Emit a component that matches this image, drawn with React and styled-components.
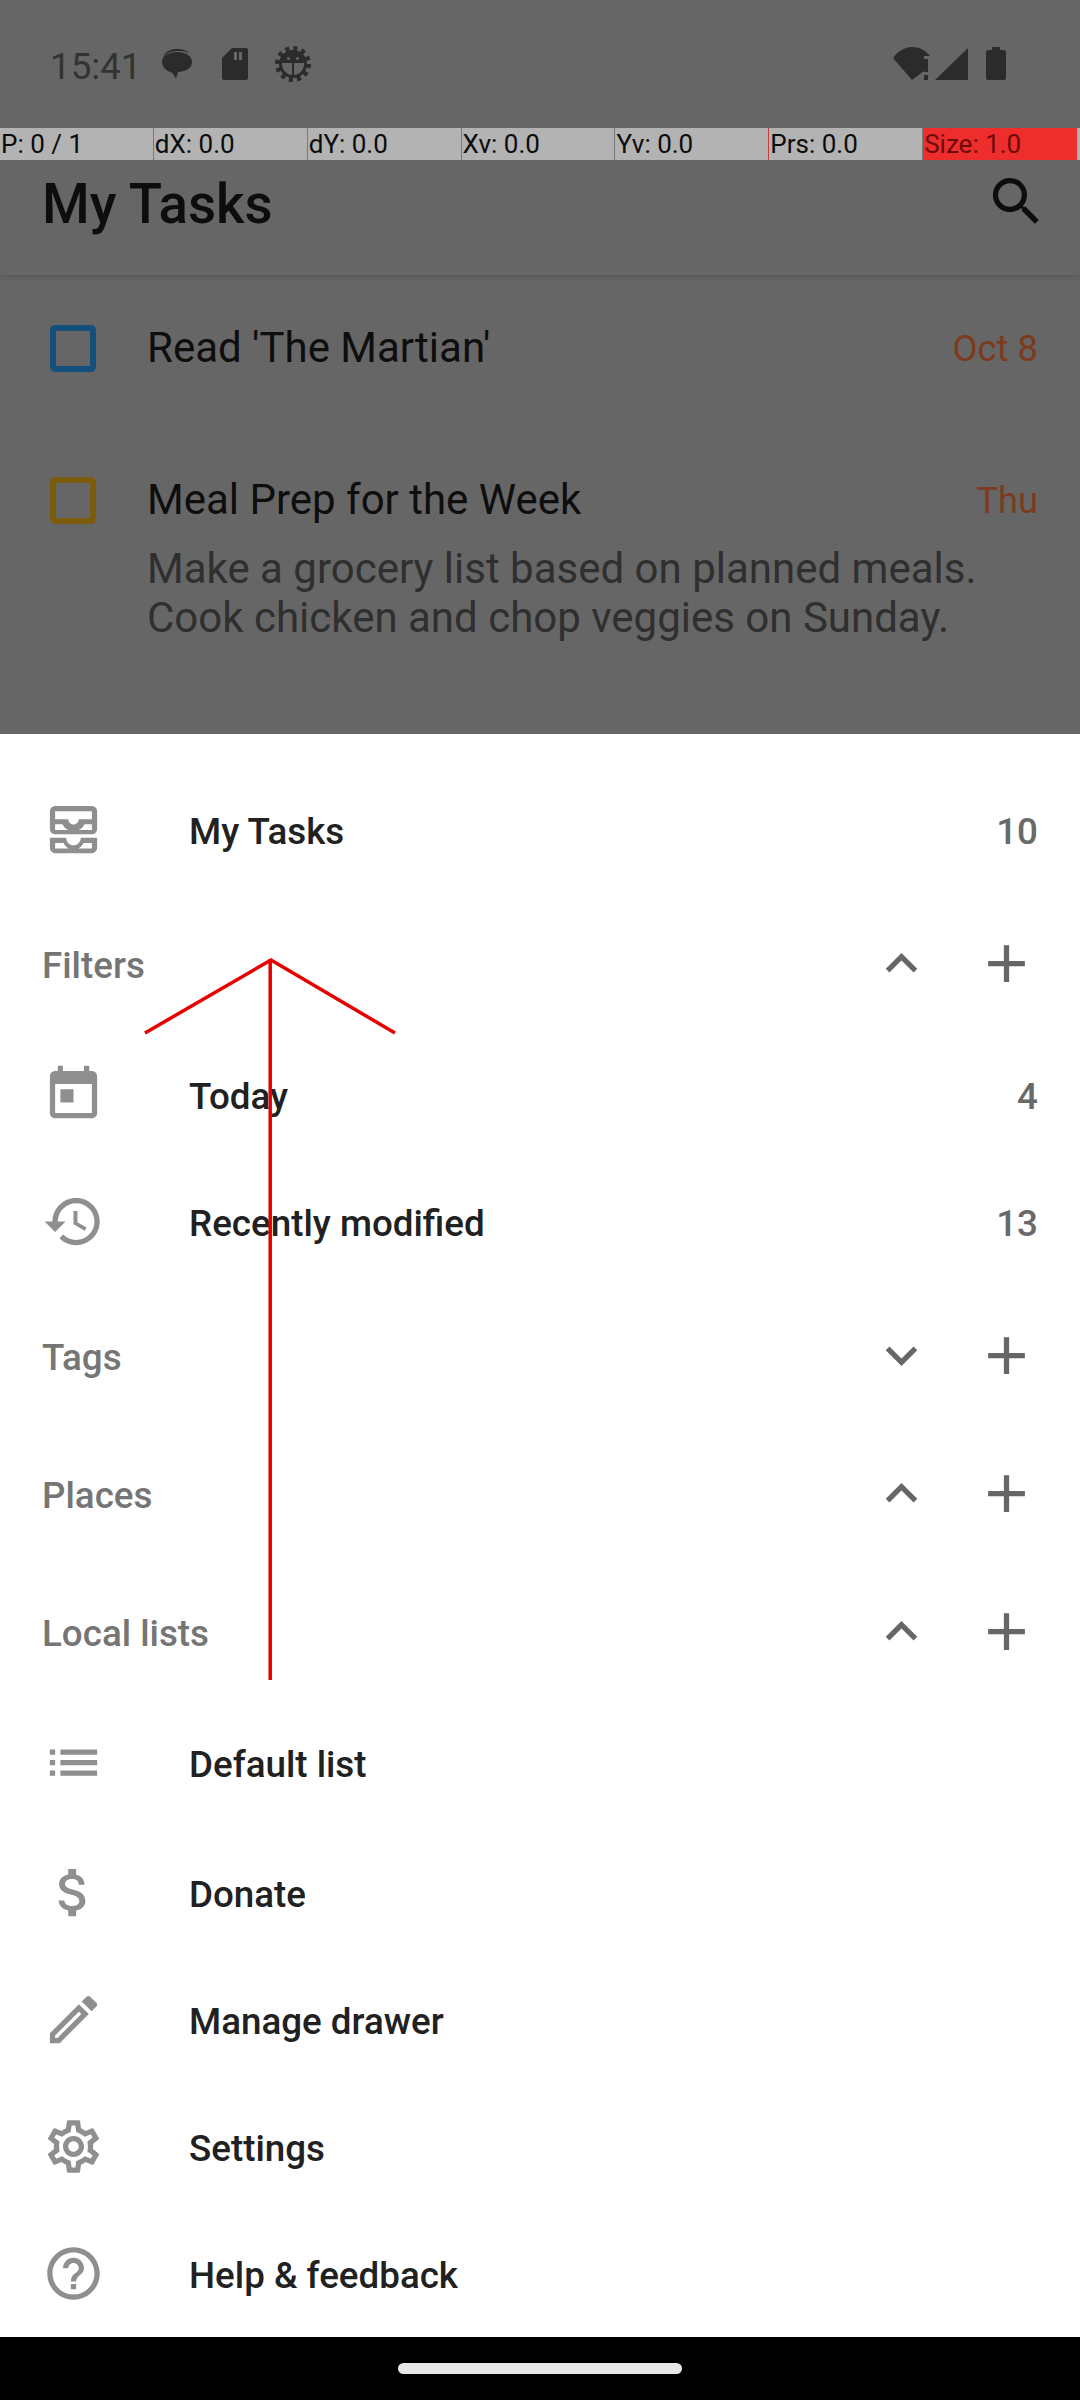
import React from 'react';
import styled, { createGlobalStyle } from 'styled-components';

const GlobalStyle = createGlobalStyle`
  html, body { margin: 0; padding: 0; background: #000; }
  body { font-family: Roboto, "Noto Sans", sans-serif; }
`;

const Page = styled.div`
  position: relative;
  width: 1080px;
  height: 2400px;
  overflow: hidden;
  display: flex;
  flex-direction: column;
`;

const Backdrop = styled.div`
  height: 734px;
  flex: none;
  background: #666;
  overflow: hidden;
`;

const StatusBar = styled.div`
  height: 127px;
  box-sizing: border-box;
  padding: 0 74px 0 50px;
  display: flex;
  align-items: center;
  color: #2b2b2b;
`;

const Clock = styled.span`
  font-size: 36.75px;
  color: #333;
  width: 112px;
  padding-top: 5px;
`;

const StatusGlyph = styled.svg`
  display: block;
  flex: none;
  fill: #2b2b2b;
  margin-left: ${p => p.$gap || 0}px;
`;

const Spacer = styled.div`
  flex: 1;
`;

const PointerBar = styled.div`
  position: absolute;
  top: 128px;
  left: 0;
  width: 1080px;
  height: 32px;
  display: grid;
  grid-template-columns: repeat(7, 153.86px);
  background: #b3b3b3;
`;

const PointerCell = styled.div`
  box-sizing: border-box;
  height: 32px;
  line-height: 32px;
  font-size: 26px;
  padding-left: 1px;
  white-space: nowrap;
  overflow: hidden;
  color: ${p => (p.$alert ? '#6e0a0a' : '#0c0c0c')};
  background: ${p => (p.$alert ? '#ee2d2d' : 'transparent')};
  border-right: ${p => (p.$alert ? 'none' : `1px solid ${p.$edge ? '#c04040' : '#7a7a7a'}`)};
`;

const Toolbar = styled.div`
  height: 148px;
  box-sizing: border-box;
  padding: 0 32px 0 42px;
  display: flex;
  align-items: center;
  justify-content: space-between;
  box-shadow: 0 3px 5px rgba(0, 0, 0, 0.12);
`;

const ToolbarTitle = styled.div`
  font-size: 54.6px;
  font-weight: 500;
  color: #0d0d0d;
  padding-top: 5px;
`;

const Icon = styled.svg`
  display: block;
  flex: none;
  width: 63px;
  height: 63px;
  fill: ${p => p.$color || '#8f8f8f'};
`;

const TaskList = styled.div`
  display: flex;
  flex-direction: column;
  padding-top: 50px;
`;

const Task = styled.div`
  display: grid;
  grid-template-columns: 46px 1fr auto;
  column-gap: 51px;
  padding: 0 42px 0 50px;
  margin-bottom: ${p => p.$after || 0}px;
`;

const Check = styled.div`
  box-sizing: border-box;
  width: 46px;
  height: 47px;
  border: 6px solid ${p => p.$color};
  border-radius: 5px;
`;

const TaskTitle = styled.div`
  font-size: 42px;
  line-height: 44px;
  padding-top: 1px;
  color: #0e0e0e;
`;

const TaskDate = styled.div`
  font-size: 36.4px;
  line-height: 47px;
  color: #7c3a1e;
`;

const TaskNote = styled.div`
  grid-column: 2 / 4;
  margin-top: 20px;
  font-size: 42px;
  line-height: 49px;
  color: #2f2f2f;
`;

const Sheet = styled.div`
  flex: none;
  height: 1603px;
  box-sizing: border-box;
  padding-top: 32px;
  background: #fff;
  overflow: hidden;
`;

const NavRow = styled.div`
  height: 127px;
  box-sizing: border-box;
  padding: 0 42px;
  margin-top: ${p => p.$top || 0}px;
  display: flex;
  align-items: center;
`;

const NavLabel = styled.div`
  flex: 1;
  margin-left: 84px;
  padding-top: 4px;
  font-size: 36.75px;
  font-weight: 500;
  color: #212121;
`;

const NavCount = styled.div`
  padding-top: 4px;
  font-size: 36.75px;
  font-weight: 500;
  color: #696969;
`;

const Header = styled.div`
  height: 138px;
  box-sizing: border-box;
  padding: 3px 42px 0;
  display: flex;
  align-items: center;
`;

const HeaderLabel = styled.div`
  flex: 1;
  padding-top: 4px;
  font-size: 36.75px;
  font-weight: 500;
  color: #757575;
`;

const HeaderActions = styled.div`
  display: flex;
  gap: 42px;
`;

const NavBar = styled.div`
  flex: 1;
  background: #000;
  display: flex;
  justify-content: center;
  padding-top: 26px;
`;

const Pill = styled.div`
  width: 284px;
  height: 11px;
  border-radius: 6px;
  background: #e8e8e8;
`;

const Trace = styled.svg`
  position: absolute;
  top: 0;
  left: 0;
  width: 1080px;
  height: 2400px;
  pointer-events: none;
`;

const paths = {
  search: 'M15.5 14h-.79l-.28-.27C15.41 12.59 16 11.11 16 9.5 16 5.91 13.09 3 9.5 3S3 5.91 3 9.5 5.91 16 9.5 16c1.61 0 3.09-.59 4.23-1.57l.27.28v.79l5 4.99L20.49 19l-4.99-5zm-6 0C7.01 14 5 11.99 5 9.5S7.01 5 9.5 5 14 7.01 14 9.5 11.99 14 9.5 14z',
  add: 'M19 13h-6v6h-2v-6H5v-2h6V5h2v6h6v2z',
  less: 'M12 8l-6 6 1.41 1.41L12 10.83l4.59 4.58L18 14z',
  more: 'M16.59 8.59L12 13.17 7.41 8.59 6 10l6 6 6-6z',
  inbox: 'M19 3H5a2 2 0 0 0-2 2v6.800a2 2 0 0 0 2 2h14a2 2 0 0 0 2-2V5a2 2 0 0 0-2-2zM5 5h14v3.100h-5c0 1.100-.9 2-2 2s-2-.9-2-2H5V5zm0 7.200V10h2.800c.45.95 1.200 1.750 2.200 2.200H5zm14 0h-5c1-.45 1.750-1.250 2.200-2.200H19v2.200zM3 15.100h6.200c.1 1.600 1.300 2.900 2.800 2.900s2.700-1.300 2.800-2.900H21V19a2 2 0 0 1-2 2H5a2 2 0 0 1-2-2v-3.900zm2 2v2.100h5.200c-.9-.4-1.600-1.200-2-2.100H5zm14 0h-3.200c-.4.9-1.100 1.700-2 2.100H19v-2.100z',
  today: 'M19 3h-1V1h-2v2H8V1H6v2H5c-1.11 0-1.99.9-1.99 2L3 19c0 1.1.89 2 2 2h14c1.1 0 2-.9 2-2V5c0-1.1-.9-2-2-2zm0 16H5V8h14v11zM7 10h5v5H7z',
  history: 'M13 3c-4.97 0-9 4.03-9 9H1l3.89 3.89.07.14L9 12H6c0-3.87 3.13-7 7-7s7 3.13 7 7-3.13 7-7 7c-1.93 0-3.68-.79-4.94-2.06l-1.42 1.42C8.27 19.99 10.51 21 13 21c4.97 0 9-4.03 9-9s-4.03-9-9-9zm-1 5v5l4.28 2.54.72-1.21-3.5-2.08V8H12z',
  list: 'M3 13h2v-2H3v2zm0 4h2v-2H3v2zm0-8h2V7H3v2zm4 4h14v-2H7v2zm0 4h14v-2H7v2zM7 7v2h14V7H7z',
  money: 'M11.8 10.9c-2.27-.59-3-1.2-3-2.15 0-1.09 1.01-1.85 2.7-1.85 1.78 0 2.44.85 2.5 2.1h2.21c-.07-1.72-1.12-3.3-3.21-3.81V3h-3v2.16c-1.94.42-3.5 1.68-3.5 3.61 0 2.31 1.91 3.46 4.7 4.13 2.5.6 3 1.48 3 2.41 0 .69-.49 1.79-2.7 1.79-2.06 0-2.87-.92-2.98-2.1h-2.2c.12 2.19 1.76 3.42 3.68 3.83V21h3v-2.15c1.95-.37 3.5-1.5 3.5-3.55 0-2.84-2.43-3.81-4.7-4.4z',
  edit: 'M3 17.25V21h3.75L17.81 9.94l-3.75-3.75L3 17.25zM5.92 19H5v-.92l9.06-9.06.92.92L5.92 19zM20.71 5.63l-2.34-2.34c-.2-.2-.45-.29-.71-.29s-.51.1-.7.29l-1.83 1.83 3.75 3.75 1.83-1.83c.39-.39.39-1.02 0-1.41z',
  settings: 'M19.43 12.98c.04-.32.07-.64.07-.98 0-.34-.03-.66-.07-.98l2.11-1.65c.19-.15.24-.42.12-.64l-2-3.46c-.09-.16-.26-.25-.44-.25-.06 0-.12.01-.17.03l-2.49 1c-.52-.4-1.08-.73-1.69-.98l-.38-2.65C14.46 2.18 14.25 2 14 2h-4c-.25 0-.46.18-.49.42l-.38 2.65c-.61.25-1.17.59-1.69.98l-2.49-1c-.06-.02-.12-.03-.18-.03-.17 0-.34.09-.43.25l-2 3.46c-.13.22-.07.49.12.64l2.11 1.65c-.04.32-.07.65-.07.98 0 .33.03.66.07.98l-2.11 1.65c-.19.15-.24.42-.12.64l2 3.46c.09.16.26.25.44.25.06 0 .12-.01.17-.03l2.49-1c.52.4 1.08.73 1.69.98l.38 2.65c.03.24.24.42.49.42h4c.25 0 .46-.18.49-.42l.38-2.65c.61-.25 1.17-.59 1.69-.98l2.49 1c.06.02.12.03.18.03.17 0 .34-.09.43-.25l2-3.46c.12-.22.07-.49-.12-.64l-2.11-1.65zm-1.98-1.71c.04.31.05.52.05.73 0 .21-.02.43-.05.73l-.14 1.13.89.7 1.08.84-.7 1.21-1.27-.51-1.04-.42-.9.68c-.43.32-.84.56-1.25.73l-1.06.43-.16 1.13-.2 1.35h-1.4l-.19-1.35-.16-1.13-1.06-.43c-.43-.18-.83-.41-1.23-.71l-.91-.7-1.06.43-1.27.51-.7-1.21 1.08-.84.89-.7-.14-1.13c-.03-.31-.05-.54-.05-.74s.02-.43.05-.73l.14-1.13-.89-.7-1.08-.84.7-1.21 1.27.51 1.04.42.9-.68c.43-.32.84-.56 1.25-.73l1.06-.43.16-1.13.2-1.35h1.39l.19 1.35.16 1.13 1.06.43c.43.18.83.41 1.23.71l.91.7 1.06-.43 1.27-.51.7 1.21-1.07.85-.89.7.14 1.13zM12 8c-2.21 0-4 1.79-4 4s1.79 4 4 4 4-1.79 4-4-1.79-4-4-4zm0 6c-1.1 0-2-.9-2-2s.9-2 2-2 2 .9 2 2-.9 2-2 2z',
  help: 'M11 18h2v-2h-2v2zm1-16C6.48 2 2 6.48 2 12s4.48 10 10 10 10-4.48 10-10S17.52 2 12 2zm0 18c-4.41 0-8-3.59-8-8s3.59-8 8-8 8 3.59 8 8-3.59 8-8 8zm0-14c-2.21 0-4 1.79-4 4h2c0-1.1.9-2 2-2s2 .9 2 2c0 2-3 1.75-3 5h2c0-2.25 3-2.5 3-5 0-2.21-1.79-4-4-4z',
};

const MdIcon = ({ name, color }) => (
  <Icon viewBox="0 0 24 24" $color={color}>
    <path fillRule="evenodd" d={paths[name]} />
  </Icon>
);

const SectionHeader = ({ label, open }) => (
  <Header>
    <HeaderLabel>{label}</HeaderLabel>
    <HeaderActions>
      <MdIcon name={open ? 'less' : 'more'} color="#666" />
      <MdIcon name="add" color="#666" />
    </HeaderActions>
  </Header>
);

const NavItem = ({ icon, label, count, top }) => (
  <NavRow $top={top}>
    <MdIcon name={icon} />
    <NavLabel>{label}</NavLabel>
    {count && <NavCount>{count}</NavCount>}
  </NavRow>
);

const pointerCells = ['P: 0 / 1', 'dX: 0.0', 'dY: 0.0', 'Xv: 0.0', 'Yv: 0.0', 'Prs: 0.0', 'Size: 1.0'];

const App = () => (
  <Page>
    <GlobalStyle />
    <Backdrop>
      <StatusBar>
        <Clock>15:41</Clock>
        <StatusGlyph width="30" height="32" viewBox="0 0 30 32">
          <path d="M15 4C7 4 0 7.500 0 14c0 5 4 9 10 10.500l4 6 2-6.500c8-.500 14-4 14-10C30 7.500 23 4 15 4z" />
          <path d="M1 9C3 3.500 9 1 15 1c5 0 10 1.500 12 4-3-1.500-7-2.200-12-2C9 3.200 4 5 1 9z" />
        </StatusGlyph>
        <StatusGlyph $gap={30} width="26" height="32" viewBox="0 0 26 32">
          <path fillRule="evenodd" d="M10 0h14a2 2 0 0 1 2 2v28a2 2 0 0 1-2 2H2a2 2 0 0 1-2-2V10zM12 4v8h3V4zm5 0v8h3V4z" />
        </StatusGlyph>
        <StatusGlyph $gap={27} width="36" height="36" viewBox="0 0 36 36">
          <circle cx="18" cy="18" r="15.500" fill="none" stroke="#2b2b2b" strokeWidth="5" strokeDasharray="4 4.100" />
          <circle cx="18" cy="18" r="12.500" fill="none" stroke="#2b2b2b" strokeWidth="3" />
          <path d="M7 17a11 11 0 0 1 22 0z" />
          <circle cx="13.500" cy="12.500" r="1.500" fill="#666" />
          <circle cx="22.500" cy="12.500" r="1.500" fill="#666" />
          <path d="M17 17h2v13h-2z" />
        </StatusGlyph>
        <Spacer />
        <StatusGlyph width="38" height="33" viewBox="0 0 38 33">
          <path d="M0 11C5 4 12 0 19 0c7 0 13 3 18 9h-6v15l-12 9z" />
          <path d="M31 12h4v13h-4zM31 28h4v5h-4z" />
        </StatusGlyph>
        <StatusGlyph $gap={4} width="33" height="32" viewBox="0 0 33 32">
          <path d="M33 0v32H0z" />
        </StatusGlyph>
        <StatusGlyph $gap={18} width="20" height="33" viewBox="0 0 20 33">
          <path d="M6 0h8v3h3a3 3 0 0 1 3 3v25a2 2 0 0 1-2 2H2a2 2 0 0 1-2-2V6a3 3 0 0 1 3-3h3z" />
        </StatusGlyph>
      </StatusBar>
      <Toolbar>
        <ToolbarTitle>My Tasks</ToolbarTitle>
        <MdIcon name="search" color="#0d0d0d" />
      </Toolbar>
      <TaskList>
        <Task $after={105}>
          <Check $color="#14507c" />
          <TaskTitle>Read 'The Martian'</TaskTitle>
          <TaskDate>Oct 8</TaskDate>
        </Task>
        <Task>
          <Check $color="#7a5c0c" />
          <TaskTitle>Meal Prep for the Week</TaskTitle>
          <TaskDate>Thu</TaskDate>
          <TaskNote>Make a grocery list based on planned meals.<br />Cook chicken and chop veggies on Sunday.</TaskNote>
        </Task>
      </TaskList>
    </Backdrop>
    <Sheet>
      <NavItem icon="inbox" label="My Tasks" count="10" />
      <SectionHeader label="Filters" open />
      <NavItem icon="today" label="Today" count="4" />
      <NavItem icon="history" label="Recently modified" count="13" />
      <SectionHeader label="Tags" />
      <SectionHeader label="Places" open />
      <SectionHeader label="Local lists" open />
      <NavItem icon="list" label="Default list" />
      <NavItem icon="money" label="Donate" top={3} />
      <NavItem icon="edit" label="Manage drawer" />
      <NavItem icon="settings" label="Settings" />
      <NavItem icon="help" label="Help & feedback" />
    </Sheet>
    <NavBar>
      <Pill />
    </NavBar>
    <PointerBar>
      {pointerCells.map((text, i) => (
        <PointerCell key={text} $alert={i === 6} $edge={i === 4}>{text}</PointerCell>
      ))}
    </PointerBar>
    <Trace viewBox="0 0 1080 2400">
      <path d="M270.200 1680V959" stroke="#e60000" strokeWidth="3.500" fill="none" />
      <path d="M145 1033L271 960L395 1033" stroke="#e60000" strokeWidth="3.500" fill="none" />
    </Trace>
  </Page>
);

export default App;
